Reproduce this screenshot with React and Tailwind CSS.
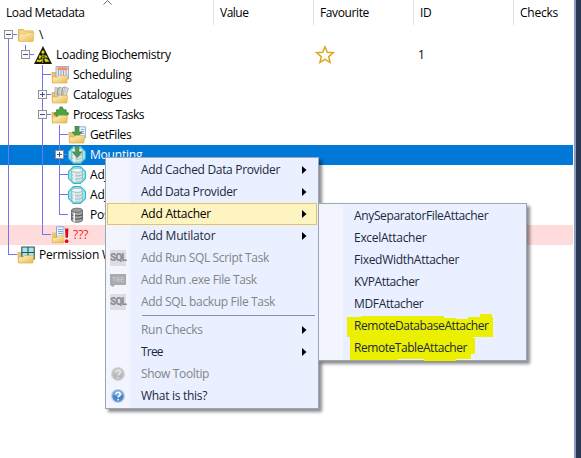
import React from "react";

function Folder({ children, full }) {
  return (
    <svg width="18" height="18" viewBox="0 0 18 18" className="shrink-0">
      <defs>
        <linearGradient id="folderFill" x1="0" y1="0" x2="1" y2="1">
          <stop offset="0" stopColor="#fff6cf" />
          <stop offset="1" stopColor="#e9b94a" />
        </linearGradient>
      </defs>
      {full ? (
        <>
          <path d="M1.5 3.5h5l1 1.5h8.5v10H1.5z" fill="#f4d681" stroke="#e2b450" />
          <path d="M2.5 8h6l1.5-1.5h7l-1 9H2z" fill="url(#folderFill)" stroke="#e8bf62" strokeWidth=".7" />
        </>
      ) : (
        <>
          <path d="M.8 6.5h4l1 1.5h9.5v8.5H1.5z" fill="#eac565" stroke="#d9ac4b" strokeWidth=".7" />
          {children}
          <path d="M1.5 11h4.5l2-1.5h8.5l-.7 7.5H1.6z" fill="url(#folderFill)" stroke="#dfb04c" strokeWidth=".7" />
        </>
      )}
    </svg>
  );
}

function Cylinder({ grey }) {
  const line = grey ? "#5c5c5c" : "#9ab2b5";
  return (
    <g stroke={line} strokeWidth=".8" fill={grey ? "#a9a9a9" : "#d2e4e5"}>
      <path d="M3.5 4.5v9.5c0 3 11 3 11 0V4.5z" />
      <path d="M3.5 11c0 2.8 11 2.8 11 0M3.5 7.8c0 2.8 11 2.8 11 0" fill="none" strokeWidth={grey ? 1.3 : 0.8} />
      <path d="M6.2 6.5v9.3" stroke="#f2f6f6" strokeWidth="1.6" />
      <ellipse cx="9" cy="4.3" rx="5.5" ry="2.1" fill={grey ? "#9d9d9d" : "#eef5f5"} />
    </g>
  );
}

function Database({ arrow, grey }) {
  return (
    <svg width="18" height="18" viewBox="0 0 18 18" className="shrink-0">
      {!grey && <path d="M5.5 .6h7l4.9 4.9v7l-4.9 4.9h-7L.6 12.5v-7z" fill="#9eeaf2" stroke="#2cbdd0" strokeWidth="1.1" />}
      <Cylinder grey={grey} />
      {arrow && <path d="M7.4 0h3.5v6h3L9.1 11.7 4.4 6h3z" fill="#4c9a5a" stroke="#35794a" strokeWidth=".6" />}
    </svg>
  );
}

function Hazard() {
  return (
    <svg width="18" height="18" viewBox="0 0 18 18" className="shrink-0">
      <path d="M9 0 18 18H0z" fill="#17180a" />
      <path d="M8 4.5l2 .2.5 2-1.5 1.2L7.3 7zM5.5 9l2 1-.7 2-2.3.3zM10.5 9l2 .7 1.2 2.2-2.2-.3zM3 13.5l3 .5 1-1 1.8 1.3-2 1.7-4.2-.2zM10 13.3l3-.5 2.5 2.8-4 .4z" fill="#d6d21a" />
      <path d="M8 9.2h2v2.2H8zM8.7 12v5M5 12.8l2-1.2M12 12.6l-1.6-1" fill="none" stroke="#b8b41a" strokeWidth=".9" />
    </svg>
  );
}

function RowIcon({ name }) {
  switch (name) {
    case "folder":
      return <Folder full />;
    case "hazard":
      return <Hazard />;
    case "schedule":
      return (
        <Folder>
          <path d="M5 .5h12.5V13H5z" fill="#e3ebf8" stroke="#7d9fd3" strokeWidth=".8" />
          <path d="M6.5 1.3h10v3h-10z" fill="#ff8a4c" />
          <path d="M7.5 4.5V11M10 4.5V11M12.5 4.5V11M15 4.5V12" stroke="#89a5d2" />
        </Folder>
      );
    case "catalogues":
      return (
        <Folder>
          <path d="M4.2 1.2l3 1-1 9H3.5zM8.5 1l3 1-1.3 9H7.3zM13.5 .8l4 1.4-3 9.3h-3z" fill="#d4d4d4" stroke="#a5a5a5" strokeWidth=".7" />
          <path d="M7.2 2.2l1.3-1M11.6 2l1.8-1M6 9l1.2-7M10.5 9l1.2-7" stroke="#929292" />
        </Folder>
      );
    case "process":
      return (
        <Folder>
          <path d="M5.5 3.8h3.2C7.2-.2 13.2-.2 12 3.8h3.2v2.7c3-1 3.5 3 0 2.7V12.8h-4c.3-3-3-3-2.5 0H5.5V9.2C2.3 9.7 2.5 5.7 5.5 6.5z" fill="#4da344" stroke="#327d37" strokeWidth=".7" />
        </Folder>
      );
    case "getfiles":
      return (
        <Folder>
          <path d="M8 .8h9.4v11H8z" fill="#eaf2fc" stroke="#739cce" strokeWidth=".8" />
          <path d="M13 3.5h3M13 5.5h3M13 7.5h3" stroke="#82abda" />
          <path d="M7 0h4v6h3L9 11.7 4 6h3z" fill="#509b49" stroke="#317b38" strokeWidth=".6" />
        </Folder>
      );
    case "problem":
      return (
        <svg width="18" height="18" viewBox="0 0 18 18" className="shrink-0">
          <path d="M1 6.5h5v10H1z" fill="#eac565" />
          <path d="M5.5 .8h7.5v11H5.5z" fill="#eaf2fc" stroke="#739cce" strokeWidth=".8" />
          <path d="M7 3.5h5M7 5.5h5M7 7.5h5" stroke="#82abda" />
          <path d="M1.2 11.5h4.5l1.8-1.8h6v7H1.5z" fill="url(#folderFill)" stroke="#dfb04c" strokeWidth=".7" />
          <path d="M13.2 2.5h5v15h-5z" fill="#fff" opacity=".7" />
          <path d="M14 2.5h3.5l-.5 9.3h-2.5z" fill="#d90c17" />
          <circle cx="15.7" cy="15.2" r="1.9" fill="#d90c17" />
        </svg>
      );
    case "window":
      return (
        <Folder>
          <path d="M5 1h12.3v12H5z" fill="#9ce9f0" />
          <path d="M4.8 1h12.4v12H4.8zM11 1v12M4.8 6.5h12.4" fill="none" stroke="#384a50" strokeWidth="1.1" />
        </Folder>
      );
    case "mounting":
      return <Database arrow />;
    case "cleanup":
      return <Database grey />;
    default:
      return <Database />;
  }
}

/* Guide cells: "|" passes through, "L" ends, "T" branches, "-" / "+" are expanders
   on a continuing line, "r" is a top-level expander and "m" one joined above only. */
function Guide({ kind }) {
  const box = "rm-+".includes(kind);
  const above = "|LTm-+".includes(kind);
  const below = "|Tr-+".includes(kind);
  return (
    <svg width="17" height="20" viewBox="0 0 17 20" className="shrink-0" shapeRendering="crispEdges">
      {above && <path d="M8.5 0v10" stroke="#7474ee" />}
      {below && <path d="M8.5 9v11" stroke="#7474ee" />}
      {(box || kind === "L" || kind === "T") && <path d="M8 9.5h9" stroke="#7474ee" />}
      {box && (
        <>
          <rect x="4.5" y="5.5" width="8" height="8" fill="#fafafa" stroke="#919191" />
          <path d="M6 9.5h5" stroke="#3b559b" />
          {kind === "+" && <path d="M8.5 7v5" stroke="#3b559b" />}
        </>
      )}
    </svg>
  );
}

const rows = [
  { guides: "r", icon: "folder", text: "\\", track: "" },
  { guides: "|m", icon: "hazard", text: "Loading Biochemistry", track: "tracking-[-0.29px]", star: true },
  { guides: "| T", icon: "schedule", text: "Scheduling", track: "tracking-[-0.26px]" },
  { guides: "| +", icon: "catalogues", text: "Catalogues", track: "tracking-[-0.3px]" },
  { guides: "| -", icon: "process", text: "Process Tasks", track: "tracking-[-0.5px]" },
  { guides: "| |T", icon: "getfiles", text: "GetFiles", track: "tracking-[-0.4px]" },
  { guides: "| |+", icon: "mounting", text: "Mounting", track: "tracking-[-0.2px]", look: "bg-[#0078d7] text-white" },
  { guides: "| |T", icon: "database", text: "Adj", track: "tracking-[-0.2px]" },
  { guides: "| |T", icon: "database", text: "Adj", track: "tracking-[-0.2px]" },
  { guides: "| |L", icon: "cleanup", text: "Pos", track: "tracking-[-0.2px]" },
  { guides: "| L", icon: "problem", text: "???", track: "", look: "bg-[#ffdcdc] text-[#ff1a1a]" },
  { guides: "L", icon: "window", text: "Permission W", track: "tracking-[-0.2px]" },
];

function TreeRow({ row }) {
  return (
    <div className={"flex h-5 w-[573px] items-center whitespace-nowrap " + (row.look || "text-black")}>
      <div className="flex w-[313px] items-center">
        {row.guides.split("").map((kind, i) => (
          <Guide key={i} kind={kind} />
        ))}
        <RowIcon name={row.icon} />
        <span className={"ml-1 leading-5 " + row.track}>{row.text}</span>
      </div>
      {row.star && (
        <>
          <svg width="20" height="20" viewBox="0 0 20 20" className="ml-[2px] shrink-0">
            <path d="M10 1.7l2.3 5.5 6 .5-4.6 3.9 1.4 5.9L10 14.4l-5.1 3.1 1.4-5.9-4.6-3.9 6-.5z" fill="none" stroke="#dda71b" strokeWidth="1.5" />
          </svg>
          <span className="ml-[83px]">1</span>
        </>
      )}
    </div>
  );
}

function SqlIcon() {
  return (
    <span className="flex h-4 w-4 items-center justify-center bg-[#dcdee4] font-['Roboto',sans-serif] text-[10px] font-black leading-4 tracking-[-0.9px] text-[#8e8e90]">
      SQL
    </span>
  );
}

function ExeIcon() {
  return (
    <svg width="16" height="16" viewBox="0 0 16 16">
      <path d="M0 2h16v11H5l-2 2-3-2z" fill="#a9aaad" />
      <path d="M2.5 5.5h3M4 5.5v4M7 5v5M7 7.5h2M9 5v5M14 5.5h-3v4.2h3M11 7.5h2.5" fill="none" stroke="#c9cace" />
    </svg>
  );
}

function HelpIcon({ active }) {
  return (
    <svg width="16" height="16" viewBox="0 0 16 16">
      <circle cx="8" cy="8" r="7" fill={active ? "#b4cfed" : "#d4d4d6"} />
      <circle cx="8" cy="8" r="5.7" fill={active ? "#4b84c4" : "#b9b9bb"} />
      <path d="M3 7a5 5 0 0 1 10 0c-3 1.5-7 1.5-10 0" fill={active ? "#7ba9da" : "#c6c6c8"} />
      <path d="M6 6.2c0-2.6 4.2-2.5 4.2 0C10.2 7.8 8.1 7.8 8.1 9.5M8.1 11v1.5" fill="none" stroke={active ? "#fff" : "#e8e8ea"} strokeWidth="1.6" />
    </svg>
  );
}

function MenuItem({ text, track, icon, arrow, dim, active }) {
  return (
    <div
      className={
        "mx-px flex h-[22px] items-center whitespace-nowrap border " +
        (active ? "border-[#e5c365] bg-[#fdf4bf] " : "border-transparent ") +
        (dim ? "text-[#838588]" : active ? "text-black" : "text-[#1b293e]")
      }
    >
      <span className="ml-[2px] flex w-[31px] items-center">{icon}</span>
      <span className={"leading-5 " + track}>{text}</span>
      {arrow && (
        <svg width="5" height="8" viewBox="0 0 5 8" className="ml-auto mr-[9px] shrink-0">
          <path d="M0 0l4.5 4L0 8z" fill="#000" />
        </svg>
      )}
    </div>
  );
}

const panel =
  "absolute border border-[#9ba7b7] bg-[linear-gradient(to_right,#f2f4fe_24px,#eaf0ff_24px)] py-px shadow-[3px_3px_3px_rgba(0,0,0,0.45)]";

const attachers = [
  ["AnySeparatorFileAttacher", "tracking-[-0.36px]"],
  ["ExcelAttacher", "tracking-[-0.29px]"],
  ["FixedWidthAttacher", "tracking-[-0.28px]"],
  ["KVPAttacher", "tracking-[-0.38px]"],
  ["MDFAttacher", "tracking-[-0.35px]"],
  ["RemoteDatabaseAttacher", "tracking-[-0.42px]"],
  ["RemoteTableAttacher", "tracking-[-0.45px]"],
];

export default function App() {
  return (
    <div className="relative flex h-[458px] w-[581px] overflow-hidden bg-white font-['Open_Sans','Noto_Sans',sans-serif] text-[12px]">
      <div className="w-[574px]">
        <header className="relative flex h-[25px] whitespace-nowrap leading-[26px] text-black">
          <svg width="9" height="5" viewBox="0 0 9 5" className="absolute left-[103px] top-0">
            <path d="M.5 4.5l4-4 4 4" fill="none" stroke="#666" />
          </svg>
          <div className="w-[214px] border-r border-[#e2e2e2] pl-[6px] tracking-[-0.42px]">Load Metadata</div>
          <div className="w-[100px] border-r border-[#e2e2e2] pl-[6px] tracking-[-0.5px]">Value</div>
          <div className="w-[100px] border-r border-[#e2e2e2] pl-[6px] tracking-[-0.38px]">Favourite</div>
          <div className="w-[100px] border-r border-[#e2e2e2] pl-[6px] tracking-[-0.3px]">ID</div>
          <div className="pl-[6px] tracking-[-0.25px]">Checks</div>
        </header>
        {rows.map((row, i) => (
          <TreeRow key={i} row={row} />
        ))}
      </div>
      <div className="w-[2px] bg-[#8e9bbc]" />
      <div className="w-[5px] bg-[#293955]" />

      <div className={panel + " left-[105px] top-[157px] h-[252px] w-[214px]"}>
        <MenuItem text="Add Cached Data Provider" track="tracking-[-0.32px]" arrow />
        <MenuItem text="Add Data Provider" track="tracking-[-0.36px]" arrow />
        <MenuItem text="Add Attacher" track="tracking-[-0.25px]" arrow active />
        <MenuItem text="Add Mutilator" track="tracking-[-0.2px]" arrow />
        <MenuItem text="Add Run SQL Script Task" track="tracking-[-0.36px]" icon={<SqlIcon />} dim />
        <MenuItem text="Add Run .exe File Task" track="tracking-[-0.38px]" icon={<ExeIcon />} dim />
        <MenuItem text="Add SQL backup File Task" track="tracking-[-0.33px]" icon={<SqlIcon />} dim />
        <div className="mb-[3px] ml-9 mr-[3px] mt-[2px] h-px bg-[#8591a8]" />
        <MenuItem text="Run Checks" track="tracking-[-0.3px]" arrow dim />
        <MenuItem text="Tree" track="tracking-[-0.8px]" arrow />
        <MenuItem text="Show Tooltip" track="tracking-[-0.35px]" icon={<HelpIcon />} dim />
        <MenuItem text="What is this?" track="tracking-[-0.3px]" icon={<HelpIcon active />} />
      </div>

      <div className={panel + " left-[318px] top-[203px] h-[158px] w-[209px]"}>
        <svg width="150" height="48" viewBox="0 0 150 48" className="absolute left-[27px] top-[110px]">
          <path d="M1 7V3h14V2h83v2h12v1h12V3h12V0h12v3h1v20h-20v1h2v16h-4v5H110v2H78v-2H52v1H4V23H1z" fill="#ebf000" />
        </svg>
        <div className="relative">
          {attachers.map(([text, track]) => (
            <MenuItem key={text} text={text} track={track} />
          ))}
        </div>
      </div>
    </div>
  );
}
